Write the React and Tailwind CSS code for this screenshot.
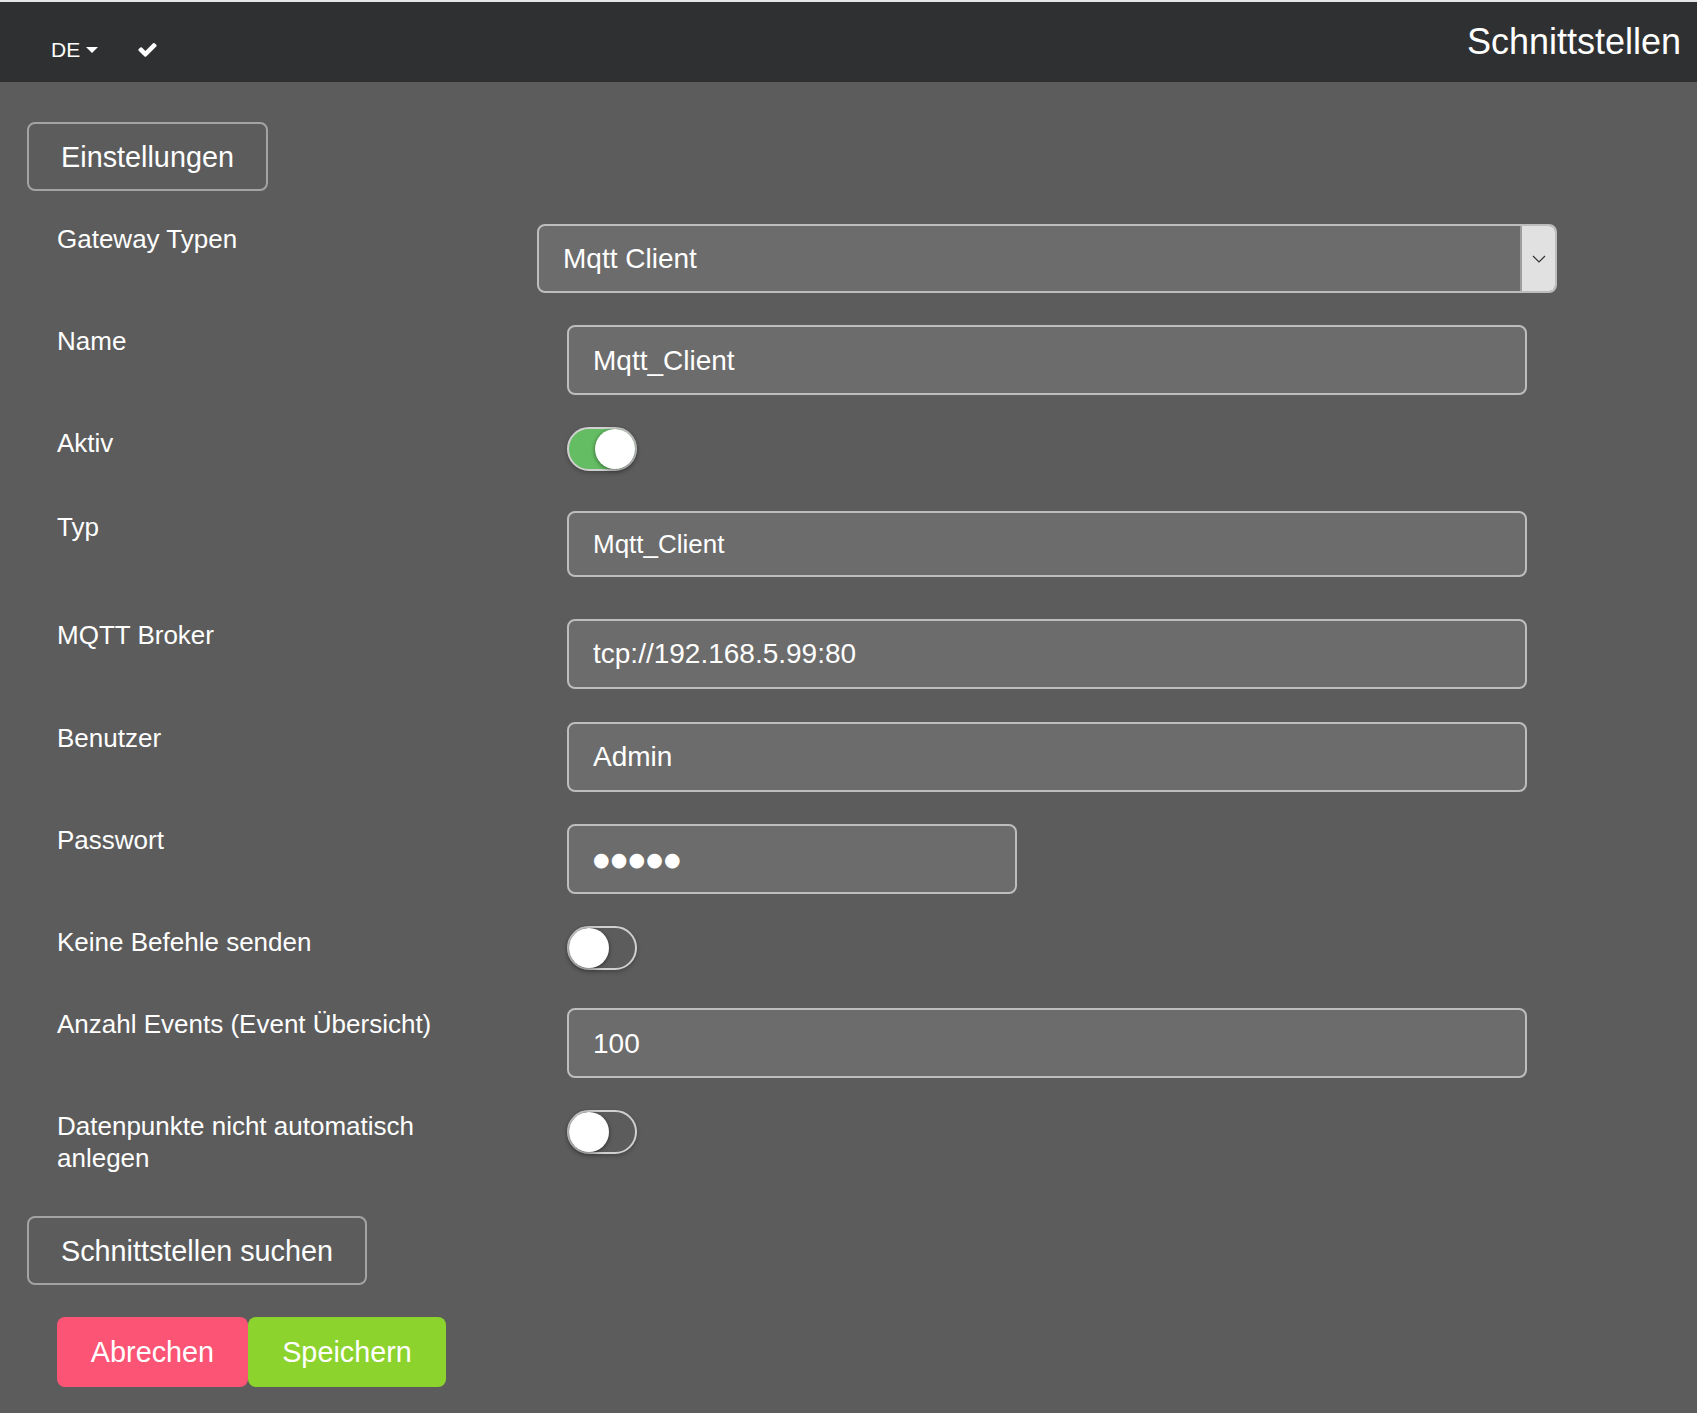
function Field({ value, size = 'text-[28px] pt-[2px]', className = 'h-[70px] w-[960px]' }) {
  return (
    <input
      readOnly
      type="text"
      value={value}
      className={`${className} ${size} rounded-[8px] border-2 border-[#bdbdbd] bg-[#6c6c6c] px-6 text-white outline-none`}
    />
  );
}

function Toggle({ on }) {
  return (
    <div className={`relative h-[44px] w-[70px] rounded-full border-2 border-[#d0d0d0] shadow-[0_2px_4px_rgba(0,0,0,0.25)] ${on ? 'bg-[#64bd63]' : 'bg-[#5c5c5c]'}`}>
      <div className={`absolute top-0 h-[40px] w-[40px] rounded-full bg-white shadow-[0_1px_4px_rgba(0,0,0,0.5)] ${on ? 'right-0' : 'left-0'}`} />
    </div>
  );
}

function Row({ label, children, className = '' }) {
  return (
    <div className={`flex pl-[57px] ${className}`}>
      <label className="w-[480px] shrink-0 pr-[40px] text-[26px] leading-[32px] text-white">{label}</label>
      <div className="ml-[30px]">{children}</div>
    </div>
  );
}

export default function App() {
  return (
    <div className="min-h-[1413px] bg-[#5c5c5c] pb-[27px] font-['Liberation_Sans',Arial,sans-serif] text-white">
      {/* Navbar */}
      <div className="border-t-2 border-[#e6e6e6] bg-[#2f3032]">
        <div className="flex h-[80px] items-start justify-between pr-[16px]">
          <div className="flex items-center pl-[51px] pt-[33px]">
            <span className="text-[21px] leading-[30px]">DE</span>
            <span className="ml-[6px] h-0 w-0 border-x-[6px] border-t-[6px] border-x-transparent border-t-white" />
            <svg className="-mt-[2px] ml-[39px]" width="21" height="21" viewBox="0 0 1792 1792" fill="#fff">
              <path d="M1671 566q0 40-28 68l-724 724-136 136q-28 28-68 28t-68-28l-136-136-362-362q-28-28-28-68t28-68l136-136q28-28 68-28t68 28l294 295 656-657q28-28 68-28t68 28l136 136q28 28 28 68z" />
            </svg>
          </div>
          <div className="pt-[15px] text-[36px] leading-[50px]">Schnittstellen</div>
        </div>
      </div>

      <div className="pt-[40px]">
        <button className="ml-[27px] h-[69px] w-[241px] rounded-[8px] border-2 border-[#a3a3a3] pt-[2px] text-[28.8px] text-white">Einstellungen</button>

        {/* Gateway type */}
        <div className="mt-[33px] flex pl-[57px]">
          <label className="w-[480px] shrink-0 text-[26px] leading-[30px]">Gateway Typen</label>
          <div className="flex h-[69px] w-[1020px] overflow-hidden rounded-[8px] border-2 border-[#bdbdbd] bg-[#6c6c6c]">
            <div className="flex flex-1 items-center pl-[24px] text-[28px]">Mqtt Client</div>
            <div className="flex w-[35px] items-center justify-center border-l-2 border-[#9e9e9e] bg-[#e1e1e1]">
              <svg width="14" height="8" viewBox="0 0 14 8" fill="none" stroke="#333" strokeWidth="1.2"><path d="M1 1l6 6 6-6" /></svg>
            </div>
          </div>
        </div>

        <Row label="Name" className="mt-[32px]"><Field value="Mqtt_Client" /></Row>
        <Row label="Aktiv" className="mt-[32px]"><Toggle on /></Row>
        <Row label="Typ" className="mt-[40px]"><Field value="Mqtt_Client" size="text-[26px]" className="h-[66px] w-[960px]" /></Row>
        <Row label="MQTT Broker" className="mt-[42px]"><Field value="tcp://192.168.5.99:80" size="text-[28px]" /></Row>
        <Row label="Benutzer" className="mt-[33px]"><Field value="Admin" size="text-[28px]" /></Row>
        <Row label="Passwort" className="mt-[32px]"><Field value="●●●●●" size="font-['DejaVu_Sans'] text-[19px] tracking-[1.2px]" className="h-[70px] w-[450px]" /></Row>
        <Row label="Keine Befehle senden" className="mt-[32px]"><Toggle /></Row>
        <Row label="Anzahl Events (Event Übersicht)" className="mt-[38px]"><Field value="100" /></Row>
        <Row label="Datenpunkte nicht automatisch anlegen" className="mt-[32px]"><Toggle /></Row>

        <button className="ml-[27px] mt-[42px] block h-[69px] w-[340px] rounded-[8px] border-2 border-[#a3a3a3] pt-[2px] text-[28.8px] text-white">Schnittstellen suchen</button>

        <div className="ml-[57px] mt-[32px] flex">
          <button className="h-[70px] w-[191px] rounded-[8px] bg-[#fc5475] pt-[2px] text-[28.8px] text-white">Abrechen</button>
          <button className="h-[70px] w-[198px] rounded-[8px] bg-[#8dd32d] pt-[2px] text-[28.8px] text-white">Speichern</button>
        </div>
      </div>
    </div>
  );
}
